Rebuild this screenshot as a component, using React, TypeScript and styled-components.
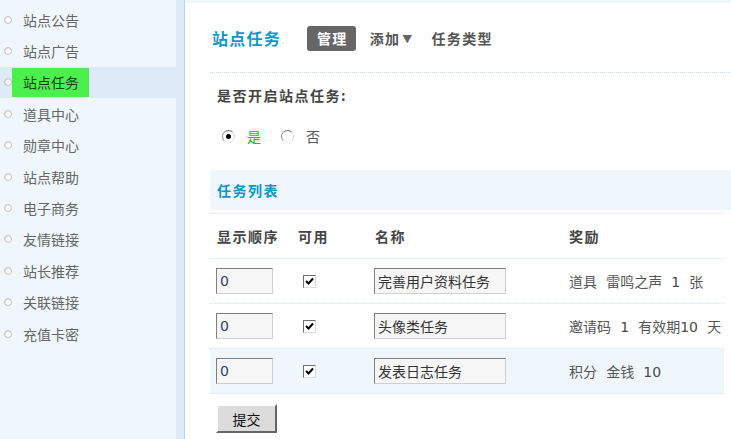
import React from "react";
import styled, { createGlobalStyle, css } from "styled-components";

const Global = createGlobalStyle`
  html, body { margin: 0; padding: 0; background: #fff; }
  body {
    font-family: "Noto Sans CJK SC", "Liberation Sans", sans-serif;
    font-size: 14px;
    color: #555;
  }
  * { box-sizing: border-box; }
`;

const Layout = styled.div`
  display: flex;
  min-height: 100vh;
`;

const Sidebar = styled.ul`
  list-style: none;
  margin: 0;
  padding: 4px 0 0;
  width: 176px;
  flex: none;
  background: #f0f7fc;
`;

const SideItem = styled.li<{ $active?: boolean }>`
  display: flex;
  align-items: center;
  height: 31.4px;
  background: ${(p) => (p.$active ? "#ddebf8" : "transparent")};
`;

const Bullet = styled.span`
  width: 8px;
  height: 8px;
  margin-left: 4px;
  border-radius: 50%;
  border: 1px solid #c4c4c4;
  background: radial-gradient(circle at 60% 60%, #fff 0 40%, #e4e4e4 70%);
  flex: none;
`;

const SideLabel = styled.span<{ $active?: boolean }>`
  display: flex;
  align-items: center;
  height: 29px;
  padding: 0 10px 0 11px;
  color: ${(p) => (p.$active ? "#1e3a1e" : "#666")};
  background: ${(p) => (p.$active ? "#4cf04c" : "transparent")};
  line-height: 1;
`;

const Divider = styled.div`
  width: 9px;
  flex: none;
  background: #dcebf7;
  border-right: 1px solid #b7d3ea;
`;

const Main = styled.div`
  flex: 1;
  padding-left: 25px;
  background: linear-gradient(#eef6fc, #eef6fc) top / 100% 3px no-repeat, #fff;
`;

const Nav = styled.div`
  display: flex;
  align-items: center;
  height: 73px;
  padding: 4px 0 0 2px;
  border-bottom: 1px dotted #c2ddf1;
`;

const Title = styled.h2`
  margin: 0;
  font-size: 16px;
  letter-spacing: 1.25px;
  font-weight: bold;
  color: #0c96c9;
`;

const NavTab = styled.span<{ $active?: boolean; $gap: number }>`
  margin-left: ${(p) => p.$gap}px;
  font-size: 14px;
  font-weight: bold;
  letter-spacing: 1.3px;
  color: #555;
  display: inline-flex;
  align-items: center;
  ${(p) =>
    p.$active &&
    css`
      background: #666;
      color: #fff;
      height: 25px;
      padding: 0 8px 0 10px;
      border-radius: 3px;
    `}
`;

const Caret = styled.span`
  font-size: 10px;
  margin-left: 2px;
  color: #666;
`;

const Question = styled.div`
  margin-top: 12px;
  padding-left: 7px;
  line-height: 20px;
  font-weight: bold;
  letter-spacing: 1.5px;
  color: #444;
`;

const RadioRow = styled.div`
  display: flex;
  align-items: center;
  height: 20px;
  margin-top: 21px;
  padding-left: 12px;
`;

const Radio = styled.span<{ $checked?: boolean }>`
  width: 13px;
  height: 13px;
  border-radius: 50%;
  border: 1px solid;
  border-color: #7a7a7a #d8d8d8 #e8e8e8 #8a8a8a;
  background: #fff;
  display: inline-flex;
  align-items: center;
  justify-content: center;
  flex: none;
  &::after {
    content: "";
    width: 5px;
    height: 5px;
    border-radius: 50%;
    background: ${(p) => (p.$checked ? "#000" : "transparent")};
  }
`;

const RadioText = styled.span<{ $on?: boolean; $gap: number }>`
  margin-left: 12px;
  margin-right: ${(p) => p.$gap}px;
  color: ${(p) => (p.$on ? "#00c800" : "#555")};
`;

const Section = styled.div`
  margin-top: 24px;
  height: 40px;
  display: flex;
  align-items: center;
  padding-left: 7px;
  background: #f0f7fc;
  font-size: 14px;
  letter-spacing: 1.5px;
  font-weight: bold;
  color: #0c96c9;
`;

const Table = styled.div`
  margin-top: 3px;
  margin-right: 7px;
  border-top: 1px dotted #cfe3f3;
`;

const Row = styled.div<{ $head?: boolean; $hover?: boolean }>`
  display: grid;
  grid-template-columns: 82px 76px 195px 1fr;
  align-items: center;
  height: 45px;
  border-bottom: 1px dotted #cfe3f3;
  background: ${(p) => (p.$hover ? "#f0f7fc" : "transparent")};
  ${(p) =>
    p.$head &&
    css`
      font-weight: bold;
      letter-spacing: 1.5px;
      color: #444;
    `}
`;

const Cell = styled.div<{ $indent?: number }>`
  padding-left: ${(p) => p.$indent ?? 6}px;
  display: flex;
  align-items: center;
  white-space: nowrap;
`;

const TextInput = styled.input<{ $w: number; $num?: boolean }>`
  width: ${(p) => p.$w}px;
  height: 26px;
  margin: 0;
  padding: 0 3px;
  border: 1px solid;
  border-color: #7f7f7f #cfcfcf #cfcfcf #7f7f7f;
  background: #f6f6f6;
  font-family: ${(p) =>
    p.$num ? '"DejaVu Sans", Verdana, sans-serif' : '"Noto Sans CJK SC", sans-serif'};
  font-size: 14px;
  color: ${(p) => (p.$num ? "#2f3f6f" : "#333")};
  outline: none;
`;

const Check = styled.span`
  width: 13px;
  height: 13px;
  margin-left: 5px;
  border: 1px solid;
  border-color: #6f6f6f #dcdcdc #dcdcdc #6f6f6f;
  background: #fff;
  display: inline-flex;
  align-items: center;
  justify-content: center;
`;

const Reward = styled.span`
  white-space: pre;
  word-spacing: 6px;
`;

const Num = styled.span`
  font-family: "DejaVu Sans", Verdana, sans-serif;
  font-size: 14px;
  color: #4a4a4a;
  word-spacing: 6px;
`;

const Submit = styled.button`
  margin: 10px 0 0 6px;
  width: 61px;
  height: 29px;
  border: 2px solid;
  border-color: #fff #666 #666 #fff;
  background: #dcdcdc;
  font-family: "Noto Sans CJK SC", sans-serif;
  font-size: 14px;
  color: #111;
  padding: 0;
`;

const CheckMark = () => (
  <svg width="9" height="8" viewBox="0 0 9 8">
    <path d="M1 4 L3.5 6.5 L8 1.5" stroke="#000" strokeWidth="2" fill="none" />
  </svg>
);

const sideItems = [
  "站点公告",
  "站点广告",
  "站点任务",
  "道具中心",
  "勋章中心",
  "站点帮助",
  "电子商务",
  "友情链接",
  "站长推荐",
  "关联链接",
  "充值卡密",
];

type Task = { name: string; reward: React.ReactNode; hover?: boolean };

const tasks: Task[] = [
  {
    name: "完善用户资料任务",
    reward: (
      <>
        {"道具 雷鸣之声 "}
        <Num>1</Num>
        {" 张"}
      </>
    ),
  },
  {
    name: "头像类任务",
    reward: (
      <>
        {"邀请码 "}
        <Num>1</Num>
        {" 有效期"}
        <Num>10</Num>
        {" 天"}
      </>
    ),
  },
  {
    name: "发表日志任务",
    reward: (
      <>
        {"积分 金钱 "}
        <Num>10</Num>
      </>
    ),
    hover: true,
  },
];

export default function App() {
  return (
    <>
      <Global />
      <Layout>
        <Sidebar>
          {sideItems.map((s) => (
            <SideItem key={s} $active={s === "站点任务"}>
              <Bullet />
              <SideLabel $active={s === "站点任务"}>{s}</SideLabel>
            </SideItem>
          ))}
        </Sidebar>
        <Divider />
        <Main>
          <Nav>
            <Title>站点任务</Title>
            <NavTab $gap={26} $active>
              管理
            </NavTab>
            <NavTab $gap={14}>
              添加<Caret>▼</Caret>
            </NavTab>
            <NavTab $gap={18}>任务类型</NavTab>
          </Nav>
          <Question>是否开启站点任务:</Question>
          <RadioRow>
            <Radio $checked />
            <RadioText $on $gap={20}>是</RadioText>
            <Radio />
            <RadioText $gap={0}>否</RadioText>
          </RadioRow>
          <Section>任务列表</Section>
          <Table>
            <Row $head>
              <Cell $indent={7}>显示顺序</Cell>
              <Cell>可用</Cell>
              <Cell $indent={7}>名称</Cell>
              <Cell>奖励</Cell>
            </Row>
            {tasks.map((t) => (
              <Row key={t.name} $hover={t.hover}>
                <Cell>
                  <TextInput $w={57} $num defaultValue="0" />
                </Cell>
                <Cell>
                  <Check>
                    <CheckMark />
                  </Check>
                </Cell>
                <Cell>
                  <TextInput $w={132} defaultValue={t.name} />
                </Cell>
                <Cell>
                  <Reward>{t.reward}</Reward>
                </Cell>
              </Row>
            ))}
          </Table>
          <Submit>提交</Submit>
        </Main>
      </Layout>
    </>
  );
}
